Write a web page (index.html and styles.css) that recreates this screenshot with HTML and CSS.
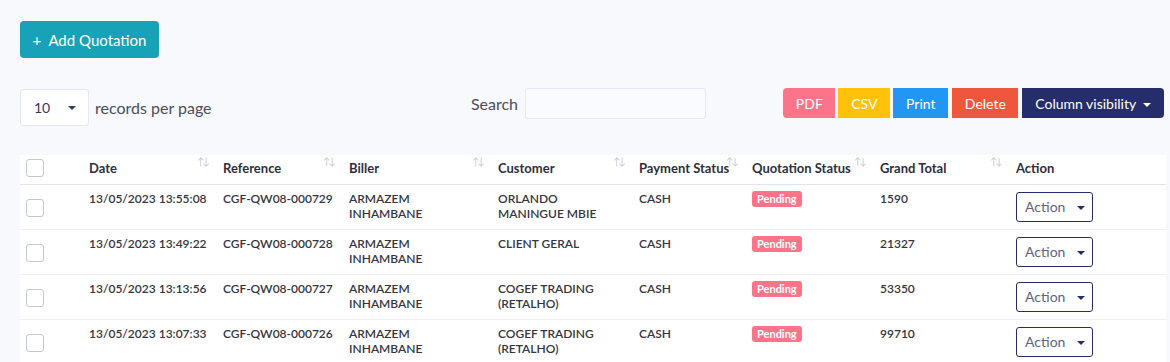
FILE: index.html
```html
<!DOCTYPE html>
<html lang="en">
<head>
  <meta charset="UTF-8" />
  <title>Quotations</title>
  <link rel="stylesheet" href="styles.css">
</head>
<body>
  <div class="page">
    <button class="btn-add">+&nbsp; Add Quotation</button>

    <div class="toolbar">
      <div class="length">
        <div class="select">10 <span class="caret"></span></div>
        <span>records per page</span>
      </div>
      <div class="search">
        <label for="q">Search</label>
        <input type="text" id="q">
      </div>
      <div class="btn-group">
        <button class="b pdf">PDF</button>
        <button class="b csv">CSV</button>
        <button class="b print">Print</button>
        <button class="b delete">Delete</button>
        <button class="b colvis">Column visibility <span class="caret white"></span></button>
      </div>
    </div>

    <table class="grid">
      <colgroup>
        <col style="width:63px"><col style="width:134px"><col style="width:126px"><col style="width:149px">
        <col style="width:141px"><col style="width:113px"><col style="width:128px"><col style="width:136px"><col>
      </colgroup>
      <thead>
        <tr>
          <th><span class="check"></span></th>
          <th class="sort">Date</th>
          <th class="sort">Reference</th>
          <th class="sort">Biller</th>
          <th class="sort">Customer</th>
          <th class="sort">Payment Status</th>
          <th class="sort">Quotation Status</th>
          <th class="sort">Grand Total</th>
          <th>Action</th>
        </tr>
      </thead>
      <tbody>
        <tr>
          <td class="cb"><span class="check"></span></td>
          <td>13/05/2023 13:55:08</td>
          <td>CGF-QW08-000729</td>
          <td>ARMAZEM<br>INHAMBANE</td>
          <td>ORLANDO<br>MANINGUE MBIE</td>
          <td>CASH</td>
          <td><span class="badge">Pending</span></td>
          <td>1590</td>
          <td><button class="action">Action <span class="caret"></span></button></td>
        </tr>
        <tr>
          <td class="cb"><span class="check"></span></td>
          <td>13/05/2023 13:49:22</td>
          <td>CGF-QW08-000728</td>
          <td>ARMAZEM<br>INHAMBANE</td>
          <td>CLIENT GERAL</td>
          <td>CASH</td>
          <td><span class="badge">Pending</span></td>
          <td>21327</td>
          <td><button class="action">Action <span class="caret"></span></button></td>
        </tr>
        <tr>
          <td class="cb"><span class="check"></span></td>
          <td>13/05/2023 13:13:56</td>
          <td>CGF-QW08-000727</td>
          <td>ARMAZEM<br>INHAMBANE</td>
          <td>COGEF TRADING<br>(RETALHO)</td>
          <td>CASH</td>
          <td><span class="badge">Pending</span></td>
          <td>53350</td>
          <td><button class="action">Action <span class="caret"></span></button></td>
        </tr>
        <tr>
          <td class="cb"><span class="check"></span></td>
          <td>13/05/2023 13:07:33</td>
          <td>CGF-QW08-000726</td>
          <td>ARMAZEM<br>INHAMBANE</td>
          <td>COGEF TRADING<br>(RETALHO)</td>
          <td>CASH</td>
          <td><span class="badge">Pending</span></td>
          <td>99710</td>
          <td><button class="action">Action <span class="caret"></span></button></td>
        </tr>
      </tbody>
    </table>
  </div>
</body>
</html>
```

FILE: styles.css
```css
body {
  margin: 0;
  background: #f8f9fd;
  font-family: 'Lato', 'Open Sans', sans-serif;
  color: #34395e;
}

.page {
  padding: 21px 4px 0 20px;
}

button {
  font-family: inherit;
  cursor: pointer;
}

.btn-add {
  display: block;
  width: 139px;
  height: 37px;
  padding: 0;
  background: #18a2b8;
  color: #fff;
  border: none;
  border-radius: 4px;
  font-size: 15px;
  font-weight: 400;
}

.toolbar {
  display: grid;
  grid-template-columns: 1fr 1fr 1fr;
  align-items: center;
  margin: 31px 1px 0 0;
  height: 37px;
}

.length {
  display: flex;
  align-items: center;
  gap: 6px;
  font-size: 16px;
  color: #4a4d5e;
}

.select {
  width: 69px;
  height: 37px;
  box-sizing: border-box;
  padding: 0 12px 0 13px;
  display: flex;
  align-items: center;
  justify-content: space-between;
  background: #fff;
  border: 1px solid #e4e6fc;
  border-radius: 3px;
  font-size: 14px;
  color: #34395e;
}

.caret {
  display: inline-block;
  width: 0;
  height: 0;
  border-left: 4px solid transparent;
  border-right: 4px solid transparent;
  border-top: 4px solid #34395e;
  vertical-align: middle;
  margin-left: 4px;
}

.caret.white {
  border-top-color: #fff;
}

.search {
  display: flex;
  align-items: center;
  justify-content: center;
  gap: 7px;
  font-size: 16px;
  color: #4a4d5e;
  margin-top: -8px;
  padding-right: 8px;
}

.search input {
  width: 181px;
  height: 31px;
  box-sizing: border-box;
  border: 1px solid #e4e6fc;
  border-radius: 3px;
  background: #fafbff;
}

.btn-group {
  display: flex;
  gap: 3px;
  margin-top: -9px;
}

.b {
  height: 30px;
  border: none;
  color: #fff;
  font-size: 14px;
  padding: 0;
}

.pdf { background: #fc7489; border-radius: 4px 0 0 4px; width: 52px; }
.csv { background: #ffc10a; width: 52px; }
.print { background: #2196f3; width: 55px; }
.delete { background: #ee573d; width: 66px; margin-left: 1px; }
.colvis { background: #252e6b; border-radius: 0 4px 4px 0; width: 142px; margin-left: 1px; }

.grid {
  margin-top: 29px;
  width: 1146px;
  border-collapse: collapse;
  table-layout: fixed;
  background: #fff;
  font-size: 12px;
}

.grid th {
  position: relative;
  text-align: left;
  font-size: 13px;
  font-weight: 700;
  color: #2d2f3e;
  height: 29px;
  padding: 0 6px 3px;
  border-bottom: 1px solid #e3e5ea;
  white-space: nowrap;
  box-sizing: border-box;
}

.grid th.sort::after {
  content: "\2191\2193";
  position: absolute;
  right: 9px;
  top: 0;
  font-size: 10px;
  font-weight: 400;
  letter-spacing: -2px;
  color: #c8cad3;
}

.grid td {
  height: 45px;
  padding: 6px 6px 0;
  vertical-align: top;
  font-weight: 600;
  color: #34353f;
  line-height: 15px;
  border-bottom: 1px solid #eef0f3;
  box-sizing: border-box;
}

.grid td.cb {
  vertical-align: middle;
  padding-top: 2px;
}

.check {
  display: block;
  width: 16px;
  height: 16px;
  border: 1px solid #c5c7cc;
  border-radius: 3px;
  background: #fff;
}

.badge {
  display: inline-block;
  background: #fc7489;
  color: #fff;
  font-size: 11px;
  font-weight: 700;
  padding: 1px 5px;
  border-radius: 3px;
  line-height: 14px;
}

.action {
  width: 77px;
  height: 30px;
  margin-top: 1px;
  background: #fff;
  border: 1px solid #252e6b;
  border-radius: 3px;
  color: #5f6480;
  font-size: 14px;
  padding: 0 0 0 1px;
}

.action .caret {
  margin-left: 8px;
  border-top-color: #252e6b;
}
```
